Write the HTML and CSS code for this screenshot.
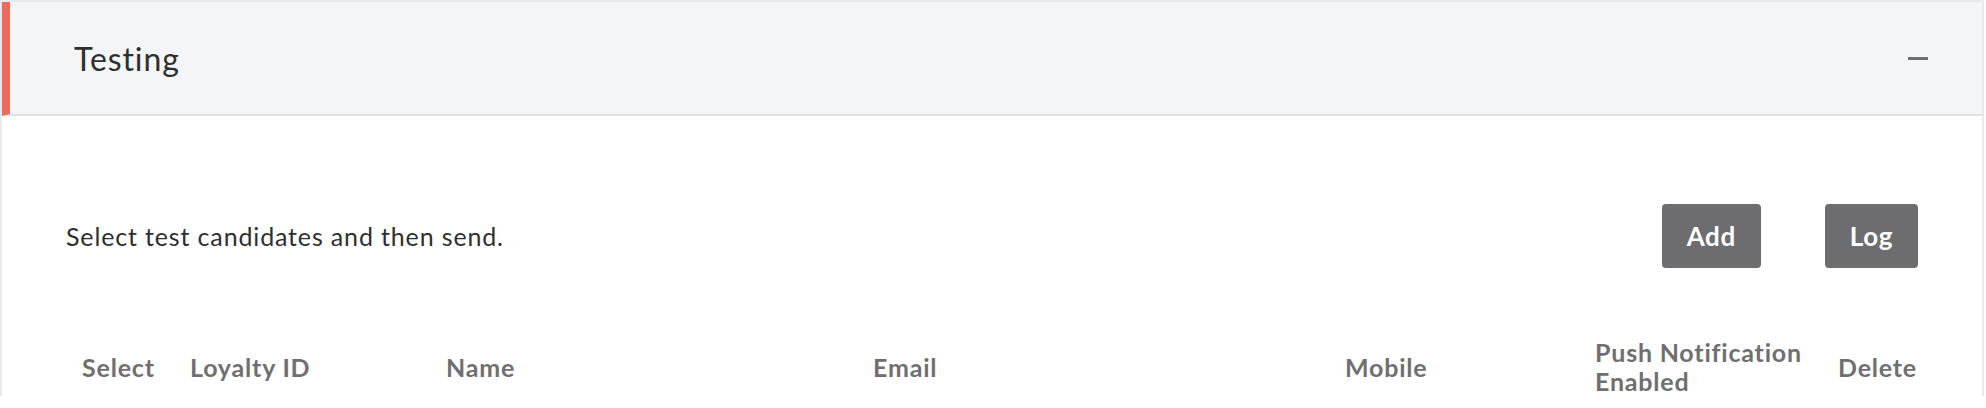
FILE: index.html
```html
<!DOCTYPE html>
<html>
<head>
<meta charset="utf-8">
<link rel="stylesheet" href="styles.css">
</head>
<body>
<section class="panel">
  <header class="panel-head">
    <h2 class="panel-title">Testing</h2>
    <span class="collapse" aria-label="Collapse"></span>
  </header>
  <div class="panel-body">
    <div class="intro">
      <p class="intro-text">Select test candidates and then send.</p>
      <div class="actions">
        <button class="btn">Add</button>
        <button class="btn">Log</button>
      </div>
    </div>
    <div class="thead">
      <div class="th">Select</div>
      <div class="th">Loyalty ID</div>
      <div class="th">Name</div>
      <div class="th">Email</div>
      <div class="th">Mobile</div>
      <div class="th">Push Notification Enabled</div>
      <div class="th">Delete</div>
    </div>
  </div>
</section>
</body>
</html>
```

FILE: styles.css
```css
* { box-sizing: border-box; }
html, body { margin: 0; padding: 0; background: #fff; }
body { font-family: Lato, "Noto Sans", sans-serif; }

.panel {
  width: 1984px;
  border: 2px solid #e8e9eb;
  border-bottom: none;
}

.panel-head {
  height: 114px;
  background: #f4f5f7;
  border-left: 8px solid #ee6a5e;
  border-bottom: 2px solid #dfe1e4;
  display: flex;
  align-items: center;
  justify-content: space-between;
  padding: 0 54px 0 64px;
}

.panel-title {
  margin: 0;
  font-weight: 400;
  font-size: 32px;
  color: #2e2f31;
  letter-spacing: 0.9px;
}

.collapse {
  width: 20px;
  height: 3px;
  background: #6f6f71;
  display: block;
}

.panel-body {
  padding: 88px 64px 0 64px;
}

.intro {
  display: flex;
  align-items: center;
  justify-content: space-between;
}

.intro-text {
  margin: 0;
  font-size: 25px;
  letter-spacing: 0.85px;
  color: #2e2f31;
}

.actions {
  display: flex;
  gap: 64px;
}

.btn {
  height: 64px;
  padding: 0 25px;
  border: none;
  border-radius: 4px;
  background: #6d6d6f;
  color: #fff;
  font-family: inherit;
  font-size: 26px;
  letter-spacing: 0.6px;
  font-weight: 700;
}

.thead {
  margin-top: 70px;
  display: grid;
  grid-template-columns: 108px 256px 427px 472px 250px 243px 96px;
  align-items: center;
}

.th {
  padding-left: 16px;
  font-size: 25px;
  letter-spacing: 0.8px;
  line-height: 29px;
  font-weight: 700;
  color: #6f6f71;
}
```
